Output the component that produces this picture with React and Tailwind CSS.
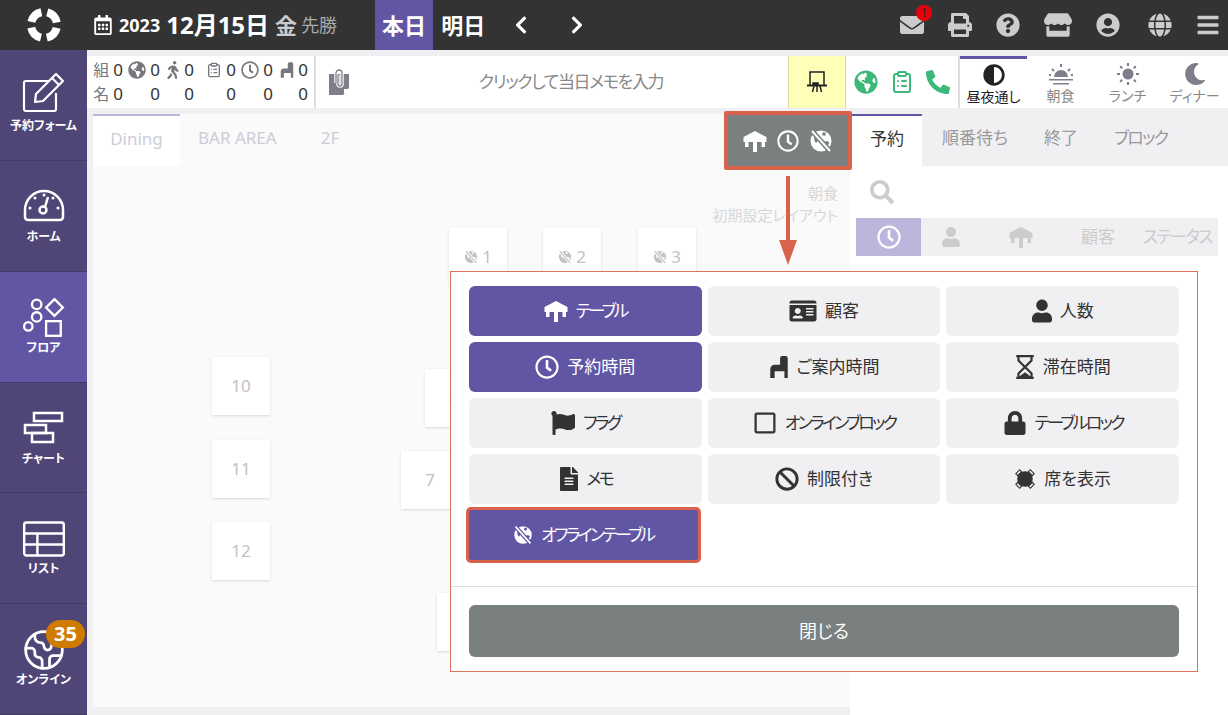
import { Earth, ClipboardList } from 'lucide-react'
import {
  FaAdjust, FaBan, FaBars, FaChevronLeft, FaChevronRight, FaEnvelope, FaFileAlt, FaFlag, FaGlobe,
  FaGlobeAmericas, FaIdCard, FaLock, FaMoon, FaPhoneAlt, FaPrint, FaQuestionCircle, FaRegCalendarAlt,
  FaRegClock, FaRegSquare, FaSearch, FaStore, FaUser, FaUserCircle, FaWalking,
} from 'react-icons/fa'

const fontStack = { fontFamily: '"Noto Sans", "Noto Sans CJK JP", sans-serif' }

// drawn icons that the packages don't carry
const TableIcon = ({ className }) => (
  <svg viewBox="0 0 24 24" fill="currentColor" className={className}>
    <path d="M12 2 23.500 8v5H22v5h-3.500v-5H14v10h-4V13H5.500v5H2v-5H.5V8z" />
  </svg>
)

const ChairIcon = ({ className }) => (
  <svg viewBox="3 1 18 22" fill="currentColor" className={className}>
    <path d="M13 4a2 2 0 0 1 2-2h3a2 2 0 0 1 2 2v18h-3v-6h-9v6H4v-8a4 4 0 0 1 4-4h5z" />
  </svg>
)

const OfflineIcon = ({ className, cut }) => (
  <svg viewBox="0 0 24 24" className={className}>
    <circle cx="12" cy="12" r="10.500" fill="currentColor" />
    <path d="M5 7c3-2 5-1 6 1s-2 3-3 5-3 0-3-6zM14 13c2-1 5-1 6 0s-2 5-4 6-2-4-2-6zM14 3l3 1-1 3-3-1z" fill={cut} />
    <path d="M3 2 21 22" stroke={cut} strokeWidth="5" />
    <path d="M3 2 21 22" stroke="currentColor" strokeWidth="2" />
  </svg>
)

const SeatIcon = ({ className }) => (
  <svg viewBox="0 0 24 24" className={className}>
    <g fill="none" stroke="currentColor" strokeWidth="1.200">
      <rect x="9" y="0.800" width="6" height="3" transform="rotate(-45 12 12)" />
      <rect x="9" y="0.800" width="6" height="3" transform="rotate(45 12 12)" />
      <rect x="9" y="20.200" width="6" height="3" transform="rotate(-45 12 12)" />
      <rect x="9" y="20.200" width="6" height="3" transform="rotate(45 12 12)" />
    </g>
    <circle cx="12" cy="12" r="8.500" fill="currentColor" />
  </svg>
)

const Hourglass = ({ className }) => (
  <svg viewBox="3 1 18 22" fill="none" stroke="currentColor" strokeWidth="2" className={className}>
    <path d="M4 2h16M4 22h16M6 2v4l6 6 6-6V2M6 22v-4l6-6 6 6v4" />
    <path d="M8 21l4-3 4 3z" fill="currentColor" />
  </svg>
)

const Logo = () => (
  <svg viewBox="0 0 36 36" className="h-9 w-9">
    <circle cx="18" cy="18" r="13" fill="none" stroke="white" strokeWidth="8" strokeDasharray="14.400 6" strokeDashoffset="-3" />
  </svg>
)

const FormIcon = () => (
  <svg viewBox="0 0 44 42" fill="none" stroke="white" strokeWidth="2.200" strokeLinejoin="round" className="h-10.5 w-11">
    <path d="M34 22v16a2 2 0 0 1-2 2H4a2 2 0 0 1-2-2V12a2 2 0 0 1 2-2h24" />
    <path d="M14 23 34 3l7 7-20 20-8 1zM30 7l7 7" />
  </svg>
)

const GaugeIcon = () => (
  <svg viewBox="0 0 44 36" fill="none" stroke="white" strokeWidth="2.500" className="h-9 w-11">
    <path d="M6 33h32a3 3 0 0 0 3-3V23a19 19 0 0 0-38 0v7a3 3 0 0 0 3 3z" />
    <circle cx="21" cy="23" r="3.500" />
    <path d="M23 20l3-10" />
    <g fill="white" stroke="none">
      <circle cx="8" cy="21" r="1.500" />
      <circle cx="36" cy="21" r="1.500" />
      <circle cx="13" cy="11" r="1.500" />
      <circle cx="31" cy="11" r="1.500" />
      <circle cx="22" cy="8" r="1.500" />
    </g>
  </svg>
)

const FloorIcon = () => (
  <svg viewBox="0 0 42 38" fill="none" stroke="white" strokeWidth="2.200" className="h-10 w-11">
    <circle cx="14" cy="6" r="4.500" />
    <circle cx="14" cy="18" r="4.500" />
    <circle cx="6" cy="27" r="4" />
    <path d="M31 1l8 8-8 8-8-8z" />
    <rect x="23" y="22" width="14" height="14" />
  </svg>
)

const ChartIcon = () => (
  <svg viewBox="0 0 42 36" fill="none" stroke="white" strokeWidth="2.500" className="h-9 w-11">
    <rect x="11" y="2" width="28" height="8" />
    <rect x="2" y="14" width="21" height="8" />
    <rect x="9" y="22" width="21" height="9" />
  </svg>
)

const ListIcon = () => (
  <svg viewBox="0 0 40 32" fill="none" stroke="white" strokeWidth="2.200" className="h-9 w-11">
    <rect x="2" y="1" width="36" height="30" rx="2" />
    <path d="M2 11h36M2 21h36M14 11v20" />
  </svg>
)

const MemoIcon = () => (
  <svg viewBox="0 0 22 28" className="h-7 w-5.5">
    <path d="M1 6h20v14l-6 7H1z" fill="#7e7e8a" />
    <path d="M16 26v-5h5z" fill="white" />
    <path d="M8 15V5a3 3 0 0 1 6 0v11a2 2 0 0 1-4 0V7" fill="none" stroke="white" strokeWidth="3.500" />
    <path d="M8 15V5a3 3 0 0 1 6 0v11a2 2 0 0 1-4 0V7" fill="none" stroke="#7e7e8a" strokeWidth="1.300" />
  </svg>
)

const BoardIcon = () => (
  <svg viewBox="0 0 24 24" fill="none" stroke="#222" strokeWidth="1.500" className="h-6 w-6">
    <path d="M5 15V2h14v13" />
    <path d="M2 15.500h20" strokeWidth="2" />
    <path d="M9 16l-1.500 6M12 16v6M15 16l1.500 6" />
    <path d="M8 13h5v2H8z" fill="#222" />
  </svg>
)

const SunriseIcon = () => (
  <svg viewBox="0 0 28 24" className="h-6 w-7 text-[#7e7e8a]" fill="currentColor">
    <path d="M7 15a7 7 0 0 1 14 0z" />
    <path d="M2 17h24v1.500H2zM6 21h16v1.500H6z" />
    <path d="M14 2v3M5 7l2 2M23 7l-2 2M2 13h2M24 13h2" stroke="currentColor" strokeWidth="2" />
  </svg>
)

const SunIcon = () => (
  <svg viewBox="0 0 24 24" className="h-6 w-6 text-[#7e7e8a]" fill="currentColor">
    <circle cx="12" cy="12" r="5.500" />
    <path d="M12 1v3M12 20v3M1 12h3M20 12h3M4.200 4.200l2 2M17.800 17.800l2 2M19.800 4.200l-2 2M6.200 17.800l-2 2" stroke="currentColor" strokeWidth="2" />
  </svg>
)

const navItems = [
  { label: '予約フォーム', icon: <FormIcon />, pad: 'pt-5', gap: 'mt-1' },
  { label: 'ホーム', icon: <GaugeIcon />, pad: 'pt-5.5', gap: 'mt-0.5' },
  { label: 'フロア', icon: <FloorIcon />, active: true, pad: 'pt-6' },
  { label: 'チャート', icon: <ChartIcon />, pad: 'pt-6' },
  { label: 'リスト', icon: <ListIcon />, pad: 'pt-6' },
  { label: 'オンライン', icon: <Earth className="h-11 w-11" strokeWidth={1.500} color="white" />, badge: 35, pad: 'pt-6' },
]

const statIcons = [
  <span className="text-base leading-none">組</span>,
  <FaGlobeAmericas className="h-4.5 w-4.5" />,
  <FaWalking className="h-4.5 w-3.5" />,
  <ClipboardList className="h-4.5 w-4" strokeWidth={2} />,
  <FaRegClock className="h-4.5 w-4.5" />,
  <ChairIcon className="h-4.5 w-3.5" />,
]

const options = [
  { label: 'テーブル', icon: <TableIcon className="h-6 w-6" />, on: true, kana: true },
  { label: '顧客', icon: <FaIdCard className="h-6 w-7" /> },
  { label: '人数', icon: <FaUser className="h-6 w-5" /> },
  { label: '予約時間', icon: <FaRegClock className="h-6 w-6" />, on: true },
  { label: 'ご案内時間', icon: <ChairIcon className="h-6 w-5" /> },
  { label: '滞在時間', icon: <Hourglass className="h-6 w-5" /> },
  { label: 'フラグ', icon: <FaFlag className="h-6 w-6" />, kana: true },
  { label: 'オンラインブロック', icon: <FaRegSquare className="h-6 w-6" />, kana: true },
  { label: 'テーブルロック', icon: <FaLock className="h-6 w-6" />, kana: true },
  { label: 'メモ', icon: <FaFileAlt className="h-6 w-5" />, kana: true },
  { label: '制限付き', icon: <FaBan className="h-6 w-6" /> },
  { label: '席を表示', icon: <SeatIcon className="h-5.5 w-5.5" /> },
]

const shifts = [
  { label: '昼夜通し', icon: <FaAdjust className="h-5.5 w-5.5 text-[#222]" />, on: true },
  { label: '朝食', icon: <SunriseIcon /> },
  { label: 'ランチ', icon: <SunIcon /> },
  { label: 'ディナー', icon: <FaMoon className="h-5.5 w-5.5 text-[#7e7e8a]" /> },
]

const tables = [
  { label: '1', offline: true, pos: 'left-[356px] top-[114px]' },
  { label: '2', offline: true, pos: 'left-[450px] top-[114px]' },
  { label: '3', offline: true, pos: 'left-[545px] top-[114px]' },
  { label: '10', pos: 'left-[119px] top-[243px]' },
  { label: '11', pos: 'left-[119px] top-[326px]' },
  { label: '12', pos: 'left-[119px] top-[408px]' },
  { label: '4', pos: 'left-[332px] top-[255px]' },
  { label: '7', pos: 'left-[308px] top-[337px]' },
  { label: '', pos: 'left-[344px] top-[479px]' },
]

const App = () => {
  return (
    <div
      className='relative flex h-screen w-full flex-col overflow-hidden bg-[#f0f0f2] text-[17px] text-[#333] [font-feature-settings:"palt"]'
      style={fontStack}
    >
      {/* Top bar */}
      <header className="flex h-12.5 shrink-0 items-center bg-[#333] text-white">
        <div className="flex w-[87px] shrink-0 justify-center">
          <Logo />
        </div>
        <div className="ml-1.5 flex items-center">
          <FaRegCalendarAlt className="h-5 w-5" />
          <span className="ml-1.5 text-lg font-bold">2023</span>
          <span className="ml-1.5 text-2xl font-bold">12月15日</span>
          <span className="ml-1.5 text-[22px] font-bold text-[#ccc]">金</span>
          <span className="ml-1 text-lg text-[#aaa]">先勝</span>
        </div>
        <div className="ml-9.5 flex h-full w-14.5 items-center justify-center bg-[#6156a4] text-[22px] font-bold">本日</div>
        <div className="ml-2 text-[22px] font-bold">明日</div>
        <FaChevronLeft className="ml-6.5 h-5 w-5" />
        <FaChevronRight className="ml-9 h-5 w-5" />
        <div className="ml-auto flex items-center gap-6 pr-2 text-[#ccc]">
          <div className="relative flex w-6 justify-center">
            <FaEnvelope className="h-6 w-6" />
            <span className="absolute -right-2 -top-2 flex h-4 w-4 items-center justify-center rounded-full bg-red-600 text-xs font-bold text-[#333]">!</span>
          </div>
          <div className="flex w-6 justify-center"><FaPrint className="h-6 w-6" /></div>
          <div className="flex w-6 justify-center"><FaQuestionCircle className="h-6 w-6" /></div>
          <div className="mx-0.5 flex w-6 justify-center"><FaStore className="h-7 w-7 shrink-0" /></div>
          <div className="flex w-6 justify-center"><FaUserCircle className="h-6 w-6" /></div>
          <div className="ml-1 flex w-6 justify-center"><FaGlobe className="h-6 w-6" /></div>
          <div className="flex w-6 justify-center"><FaBars className="h-6 w-6" /></div>
        </div>
      </header>

      <div className="flex min-h-0 flex-1">
        {/* Side nav */}
        <nav className="grid w-[87px] shrink-0 grid-rows-6 bg-[#4f4677]">
          {navItems.map((item) => (
            <div
              key={item.label}
              className={`relative flex flex-col items-center border-b border-[#443c68] text-white ${item.pad} ${item.active ? 'bg-[#6156a4]' : ''}`}
            >
              <div className="flex h-11 items-center">{item.icon}</div>
              <span className={`text-xs font-bold leading-4 ${item.gap || ''}`}>{item.label}</span>
              {item.badge && (
                <span className="absolute left-11.5 top-4 rounded-full bg-[#d17a00] px-2 text-xl font-bold leading-7">{item.badge}</span>
              )}
            </div>
          ))}
        </nav>

        <main className="flex min-w-0 flex-1 flex-col pt-1.5">
          {/* Summary strip */}
          <div className="flex h-13 shrink-0 bg-white">
            <div className="flex w-[229px] shrink-0 items-center border-r-2 border-[#ddd] pl-1.5">
              <div className="grid grid-cols-[30px_37px_34px_42px_37px_35px] gap-y-1">
                {statIcons.map((icon, i) => (
                  <div key={i} className="flex h-5 items-center justify-end gap-1 text-[#77777f]">
                    {icon}
                    <span className="text-[#333]">0</span>
                  </div>
                ))}
                {statIcons.map((_, i) => (
                  <div key={i} className="flex h-5 items-center justify-end gap-1 text-[#77777f]">
                    {i === 0 && <span className="text-base">名</span>}
                    <span className="text-[#333]">0</span>
                  </div>
                ))}
              </div>
            </div>
            <div className="flex flex-1 items-center pl-3">
              <MemoIcon />
              <span className="flex-1 pl-1 text-center tracking-[-0.08em] text-[#888]">クリックして当日メモを入力</span>
            </div>
            <div className="flex w-14.5 shrink-0 items-center justify-center border-x border-[#d8d8a0] bg-[#ffffb8]">
              <BoardIcon />
            </div>
            <div className="flex w-[114px] shrink-0 items-center justify-center gap-3 border-r-2 border-[#ddd] text-[#3cb878]">
              <FaGlobeAmericas className="h-6 w-6" />
              <ClipboardList className="h-6 w-6" />
              <FaPhoneAlt className="h-6 w-6" />
            </div>
            <div className="flex w-[268px] shrink-0">
              {shifts.map((s) => (
                <div key={s.label} className={`flex flex-1 flex-col items-center pt-1 ${s.on ? 'border-t-3 border-[#6156a4] text-[#222]' : 'pt-1.5 text-[#888]'}`}>
                  <div className="flex h-6 items-center">{s.icon}</div>
                  <span className="text-sm leading-5">{s.label}</span>
                </div>
              ))}
            </div>
          </div>

          <div className="flex min-h-0 flex-1 pt-1.5">
            {/* Floor */}
            <section className="relative mb-2 ml-1.5 flex-1 bg-[#fafafa]">
              <div className="flex h-13 text-[#ccccd8]">
                <div className="flex w-[87px] items-center justify-center border-t-2 border-[#bdb6dc] bg-white pb-1">Dining</div>
                <div className="flex items-center px-4.5 pb-1">BAR AREA</div>
                <div className="flex items-center px-6.5 pb-1">2F</div>
              </div>
              <div className="absolute right-3 top-[68px] flex flex-col items-end text-[15px] leading-5.5 text-[#d8d8d8]">
                <span>朝食</span>
                <span>初期設定レイアウト</span>
              </div>
              {tables.map((t) => (
                <div key={t.label + t.pos} className={`absolute flex h-14.5 w-14.5 items-center justify-center gap-1 bg-white text-[#c4c0c4] shadow-sm ${t.pos}`}>
                  {t.offline && <OfflineIcon className="h-3.5 w-3.5" cut="white" />}
                  {t.label}
                </div>
              ))}
            </section>

            {/* Reservation panel */}
            <aside className="flex w-[378px] shrink-0 flex-col bg-white">
              <div className="flex h-13 shrink-0 items-center bg-[#f0f0f3] pl-0.5 text-[#999]">
                <div className="flex h-full w-[70px] items-center justify-center border-t-2 border-[#6156a4] bg-white pb-1 text-[#333]">予約</div>
                <span className="ml-5 pb-1">順番待ち</span>
                <span className="ml-9 pb-1">終了</span>
                <span className="ml-9 pb-1 tracking-[-0.1em]">ブロック</span>
              </div>
              <div className="flex h-13 items-center px-5 text-[#ccc]">
                <FaSearch className="h-6 w-6" />
              </div>
              <div className="ml-1.5 mr-2.5 flex h-9.5 items-center bg-[#f0f0f3] text-[#ccc]">
                <div className="flex h-full w-[65px] items-center justify-center bg-[#bdb6dc] text-white">
                  <FaRegClock className="h-6 w-6" />
                </div>
                <div className="flex w-[60px] justify-center"><FaUser className="h-5 w-5" /></div>
                <div className="flex w-[80px] justify-center"><TableIcon className="h-6 w-6" /></div>
                <span className="ml-5">顧客</span>
                <span className="ml-auto pr-1.5 tracking-[-0.1em]">ステータス</span>
              </div>
            </aside>
          </div>
        </main>
      </div>

      {/* Selected display button */}
      <div className="absolute left-[724px] top-[111px] flex h-[59px] w-32 items-center justify-center gap-2.5 rounded-xs border-4 border-[#d9634a] bg-[#7a8080] text-white">
        <TableIcon className="h-6 w-6" />
        <FaRegClock className="h-5.5 w-5.5" />
        <OfflineIcon className="h-6 w-6" cut="#7a8080" />
      </div>

      {/* Callout arrow */}
      <svg viewBox="0 0 20 90" className="absolute left-[778px] top-[176px] h-[90px] w-5">
        <path d="M10 0v66" stroke="#d9634a" strokeWidth="4" />
        <path d="M1 64h18L10 89z" fill="#d9634a" />
      </svg>

      {/* Settings dialog */}
      <div className="absolute left-[450px] top-[271px] w-[748px] border border-[#e0705a] bg-white">
        <div className="grid grid-cols-3 gap-1.5 px-4.5 pb-6.5 pt-3.5">
          {options.map((o) => (
            <button
              key={o.label}
              className={`flex h-12.5 items-center justify-center gap-2 rounded-md ${o.on ? 'bg-[#6156a4] text-white' : 'bg-[#f0f0f3] text-[#333]'}`}
            >
              {o.icon}
              <span className={o.kana ? 'tracking-[-0.16em]' : ''}>{o.label}</span>
            </button>
          ))}
          <button className="mr-1 flex h-12.5 items-center justify-center gap-2 rounded-xs bg-[#6156a4] text-white ring-3 ring-[#d9634a]">
            <OfflineIcon className="h-5 w-5" cut="#6156a4" />
            <span className="tracking-[-0.16em]">オフラインテーブル</span>
          </button>
        </div>
        <div className="border-t border-[#ddd] px-4.5 pb-3.5 pt-4.5">
          <button className="h-13 w-full rounded-md bg-[#7a8080] text-lg text-white">閉じる</button>
        </div>
      </div>
    </div>
  )
}

export default App
